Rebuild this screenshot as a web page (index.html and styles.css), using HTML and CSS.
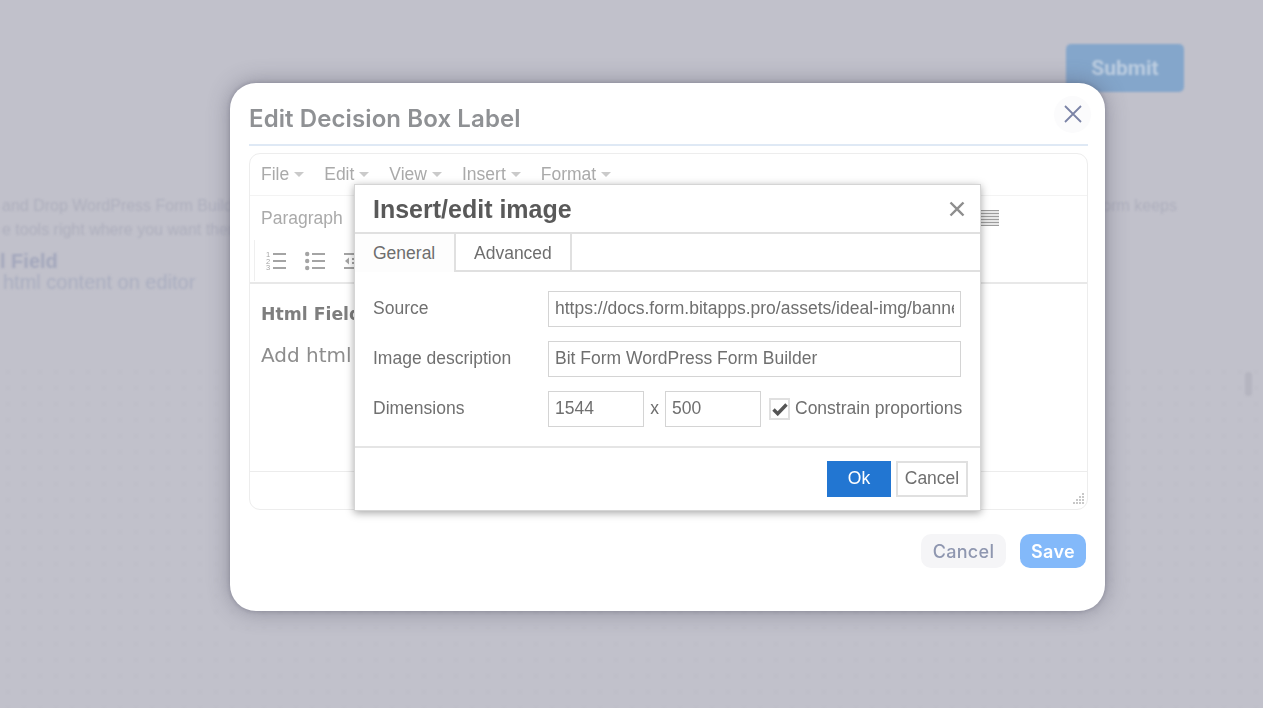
FILE: index.html
```html
<!DOCTYPE html>
<html lang="en">
<head>
<meta charset="utf-8">
<title>Edit Decision Box Label</title>
<link rel="stylesheet" href="styles.css">
</head>
<body>
<div class="page">
  <div class="topbar"><button class="submit">Submit</button></div>
  <div class="intro">
    <div class="intro-line"><span>and Drop WordPress Form Builder</span><span class="intro-right">Form keeps</span></div>
    <div class="intro-line"><span>e tools right where you want them</span></div>
    <div class="field-title">l Field</div>
    <div class="field-text">html content on editor</div>
  </div>
  <div class="canvas"><span class="grip"></span></div>
</div>

<div class="modal">
  <header class="modal-head">
    <h2 class="modal-title">Edit Decision Box Label</h2>
    <button class="modal-close" aria-label="Close">
      <svg width="20" height="20" viewBox="0 0 20 20"><path d="M2 2 18 18M18 2 2 18" stroke="#7a83a6" stroke-width="1.8" fill="none"/></svg>
    </button>
  </header>

  <div class="editor">
    <div class="menubar">
      <span class="menu">File<i class="caret"></i></span>
      <span class="menu">Edit<i class="caret"></i></span>
      <span class="menu">View<i class="caret"></i></span>
      <span class="menu">Insert<i class="caret"></i></span>
      <span class="menu">Format<i class="caret"></i></span>
    </div>
    <div class="toolbar">
      <div class="tool-row tool-row-one">
        <span class="format-select">Paragraph</span>
        <svg class="justify" width="18" height="16" viewBox="0 0 18 16"><path d="M0 .5H18M0 3.500H18M0 6.500H18M0 9.500H18M0 12.500H18M0 15.500H18" stroke="#9c9c9c" stroke-width="1.4"/></svg>
      </div>
      <div class="tool-row tool-row-two">
        <svg width="20" height="20" viewBox="0 0 20 20"><path d="M7 3H20M7 10H20M7 17H20" stroke="#a4a4a4" stroke-width="1.8"/><text x="0" y="6" class="num">1</text><text x="0" y="12.500" class="num">2</text><text x="0" y="19" class="num">3</text></svg>
        <svg width="20" height="20" viewBox="0 0 20 20"><path d="M7 3H20M7 10H20M7 17H20" stroke="#a4a4a4" stroke-width="1.8"/><circle cx="2.200" cy="3" r="2.200" fill="#a4a4a4"/><circle cx="2.200" cy="10" r="2.200" fill="#a4a4a4"/><circle cx="2.200" cy="17" r="2.200" fill="#a4a4a4"/></svg>
        <svg width="20" height="20" viewBox="0 0 20 20"><path d="M0 3H20M8 8H20M8 12H20M0 17H20" stroke="#a4a4a4" stroke-width="1.8"/><path d="M5 6.500V13.500L1 10Z" fill="#a4a4a4"/></svg>
      </div>
    </div>
    <div class="edit-area">
      <p class="edit-title">Html Field</p>
      <p class="edit-text">Add html content on editor</p>
    </div>
    <div class="statusbar">
      <svg width="12" height="12" viewBox="0 0 12 12"><path d="M10 1h2v2h-2zM7 4h2v2H7zM10 4h2v2h-2zM4 7h2v2H4zM7 7h2v2H7zM10 7h2v2h-2zM1 10h2v2H1zM4 10h2v2H4zM7 10h2v2H7zM10 10h2v2h-2z" fill="#c8c8c8"/></svg>
    </div>
  </div>

  <footer class="modal-foot">
    <button class="btn-ghost">Cancel</button>
    <button class="btn-save">Save</button>
  </footer>

  <div class="dialog">
    <div class="dialog-head">
      <h3 class="dialog-title">Insert/edit image</h3>
      <svg class="dialog-close" width="16" height="16" viewBox="0 0 16 16"><path d="M1.500 1.500 14.500 14.500M14.500 1.500 1.500 14.500" stroke="#8e8e8e" stroke-width="2.400" fill="none"/></svg>
    </div>
    <div class="tabs">
      <span class="tab tab-active">General</span>
      <span class="tab">Advanced</span>
    </div>
    <div class="form">
      <div class="form-row">
        <label class="form-label">Source</label>
        <input class="input input-wide" value="https://docs.form.bitapps.pro/assets/ideal-img/banner.png">
      </div>
      <div class="form-row">
        <label class="form-label">Image description</label>
        <input class="input input-wide" value="Bit Form WordPress Form Builder">
      </div>
      <div class="form-row">
        <label class="form-label">Dimensions</label>
        <input class="input input-dim" value="1544">
        <span class="times">x</span>
        <input class="input input-dim" value="500">
        <span class="check">
          <svg width="16" height="14" viewBox="0 0 16 14"><path d="M1.500 7.500 5.700 11.700 14.500 2.500" stroke="#555" stroke-width="3.400" fill="none"/></svg>
        </span>
        <span class="check-label">Constrain proportions</span>
      </div>
    </div>
    <div class="dialog-foot">
      <button class="btn-ok">Ok</button>
      <button class="btn-cancel">Cancel</button>
    </div>
  </div>
</div>
</body>
</html>
```
FILE: styles.css
```css
* { box-sizing: border-box; }
html, body { margin: 0; height: 100%; overflow: hidden; }
body { background: #c1c1cb; font-family: "Liberation Sans", Arial, sans-serif; }

button { font-family: inherit; cursor: pointer; }

.page {
  height: 708px;
  display: flex;
  flex-direction: column;
  filter: blur(1.1px);
  color: #a9abbb;
}
.topbar { display: flex; justify-content: flex-end; padding: 44px 79px 0 0; }
.submit {
  width: 118px; height: 48px;
  background: #84a6cb; color: #bccde0;
  border: 0; border-radius: 5px;
  font: 700 21px "Roboto", "Liberation Sans", sans-serif;
}
.intro { padding-top: 104px; }
.intro-line {
  height: 24px; line-height: 20px; font-size: 16px;
  display: flex; justify-content: space-between;
  padding-right: 86px;
  color: #aeafbd;
}
.intro-line span:first-child { margin-left: 2px; }
.field-title { font-size: 20px; font-weight: 700; line-height: 22px; margin-top: 6px; color: #a3a7bc; }
.field-text { font-size: 20px; line-height: 20px; color: #aaaec0; margin-left: 3px; }
.canvas {
  flex: 1;
  margin-top: 72px;
  position: relative;
  background-image: radial-gradient(circle, #bbbbc6 1px, transparent 1.4px);
  background-size: 16px 16px;
  background-position: 0 0;
}
.grip {
  position: absolute; right: 11px; top: 8px;
  width: 7px; height: 24px; border-radius: 3px;
  background: #b5b5c0;
}

.modal {
  position: absolute; left: 230px; top: 83px;
  width: 875px; height: 528px;
  background: #fff;
  border-radius: 26px;
  padding: 0 17px 0 19px;
  box-shadow: 0 0 22px rgba(70, 70, 90, .45), 0 0 4px rgba(70, 70, 90, .3);
  filter: blur(.35px);
}
.modal-head {
  height: 63px;
  display: flex; align-items: center; justify-content: space-between;
  padding-top: 9px;
  border-bottom: 2px solid #dfe9f5;
}
.modal-title {
  margin: 0;
  font: 600 24px "Inter", "Liberation Sans", sans-serif;
  letter-spacing: .1px;
  color: #8f9194;
}
.modal-close {
  width: 37px; height: 37px; margin: -8px -3px 0 0;
  border: 0; border-radius: 50%;
  background: #fbfbfc;
  display: flex; align-items: center; justify-content: center;
  padding: 0;
}

.editor {
  margin-top: 7px;
  width: 839px; height: 357px;
  border: 1px solid #ededed;
  border-radius: 11px;
  color: #aaa;
  display: flex; flex-direction: column;
}
.menubar {
  height: 42px; flex: none;
  display: flex; align-items: center; gap: 20px;
  padding: 0 11px;
  border-bottom: 1px solid #f3f3f3;
  font-size: 17.500px;
}
.menu { display: inline-flex; align-items: center; gap: 5px; }
.caret { width: 0; height: 0; border: 5px solid transparent; border-top-color: #cacaca; border-bottom: 0; }
.toolbar {
  height: 88px; flex: none;
  border-bottom: 2px solid #e8e8e8;
}
.tool-row-one {
  height: 44px;
  display: flex; align-items: center; justify-content: space-between;
  padding: 0 88px 0 11px;
  font-size: 17.500px;
}
.tool-row-two {
  height: 41px;
  margin-left: 4px;
  padding-left: 11px;
  border-left: 1px solid #efefef;
  display: flex; align-items: center; gap: 19px;
}
.num { font: 7.500px "Liberation Sans", sans-serif; fill: #a4a4a4; }
.edit-area {
  flex: 1;
  padding: 20px 11px 0;
  font-family: "DejaVu Sans", sans-serif;
  border-bottom: 1px solid #ececec;
}
.edit-area p { margin: 0; white-space: nowrap; }
.edit-title { font-size: 17.300px; font-weight: 700; color: #7e7e7e; line-height: 20px; }
.edit-area .edit-text { font-size: 20px; color: #8d8d8d; line-height: 24px; margin-top: 19px; }
.statusbar {
  height: 37px; flex: none;
  display: flex; justify-content: flex-end; align-items: flex-end;
  padding: 0 3px 5px 0;
}

.modal-foot {
  display: flex; justify-content: flex-end; align-items: center; gap: 14px;
  margin-top: 24px;
  padding-right: 2px;
}
.btn-ghost, .btn-save {
  height: 34px; border: 0; border-radius: 10px;
  font: 500 18px "Inter", "Liberation Sans", sans-serif;
  letter-spacing: .3px;
  padding: 0;
}
.btn-ghost { width: 85px; background: #f5f5f7; color: #8f97b0; }
.btn-save { width: 66px; background: #83b9fa; color: #fff; font-weight: 600; }

.dialog {
  position: absolute; left: 124px; top: 101px;
  width: 627px; height: 327px;
  background: #fff;
  border: 1px solid #d5d5d5;
  box-shadow: 0 2px 8px rgba(0, 0, 0, .35);
  color: #6f6f6f;
  font-size: 17.500px;
  display: flex; flex-direction: column;
}
.dialog-head {
  height: 49px; flex: none;
  display: flex; align-items: center; justify-content: space-between;
  padding: 2px 15px 0 18px;
  border-bottom: 2px solid #e0e0e0;
}
.dialog-title { margin: 0; font-size: 25px; font-weight: 700; color: #595959; }
.dialog-close { margin-bottom: 2px; }
.tabs {
  height: 38px; flex: none;
  display: flex;
  border-bottom: 2px solid #e0e0e0;
}
.tab {
  height: 36px;
  display: flex; align-items: center;
  padding: 2px 18px 0;
  border-right: 2px solid #e0e0e0;
  color: #6e6e6e;
}
.tab-active { width: 101px; background: #fdfdfd; height: 38px; padding-top: 0; position: relative; z-index: 1; }

.form { flex: none; height: 176px; padding: 19px 19px 0 18px; display: flex; flex-direction: column; gap: 14px; border-bottom: 2px solid #e5e5e5; }
.form-row { display: flex; align-items: center; height: 36px; }
.form-label { width: 175px; flex: none; color: #707070; margin-bottom: 2px; }
.input {
  height: 36px;
  flex: none;
  border: 1px solid #d4d4d4;
  background: #fff;
  padding: 0 6px 2px;
  color: #6f6f6f;
  font: 17.500px "Liberation Sans", sans-serif;
  outline: none;
}
.input-wide { width: 413px; }
.input-dim { width: 96px; }
.times { width: 21px; text-align: center; flex: none; margin-bottom: 2px; }
.check {
  width: 21px; height: 22px; margin-left: 8px;
  border: 2px solid #e0e0e0;
  display: flex; align-items: center; justify-content: center;
  flex: none;
}
.check-label { margin: 0 0 2px 5px; white-space: nowrap; }

.dialog-foot {
  flex: 1;
  display: flex; justify-content: flex-end; gap: 5px;
  padding: 13px 12px 0 0;
}
.btn-ok, .btn-cancel { height: 36px; font-size: 17.500px; padding: 0 0 2px; }
.btn-ok { width: 64px; background: #2276d2; border: 0; color: #fff; }
.btn-cancel { width: 72px; background: #fff; border: 2px solid #e0e0e0; color: #6f6f6f; }
```
